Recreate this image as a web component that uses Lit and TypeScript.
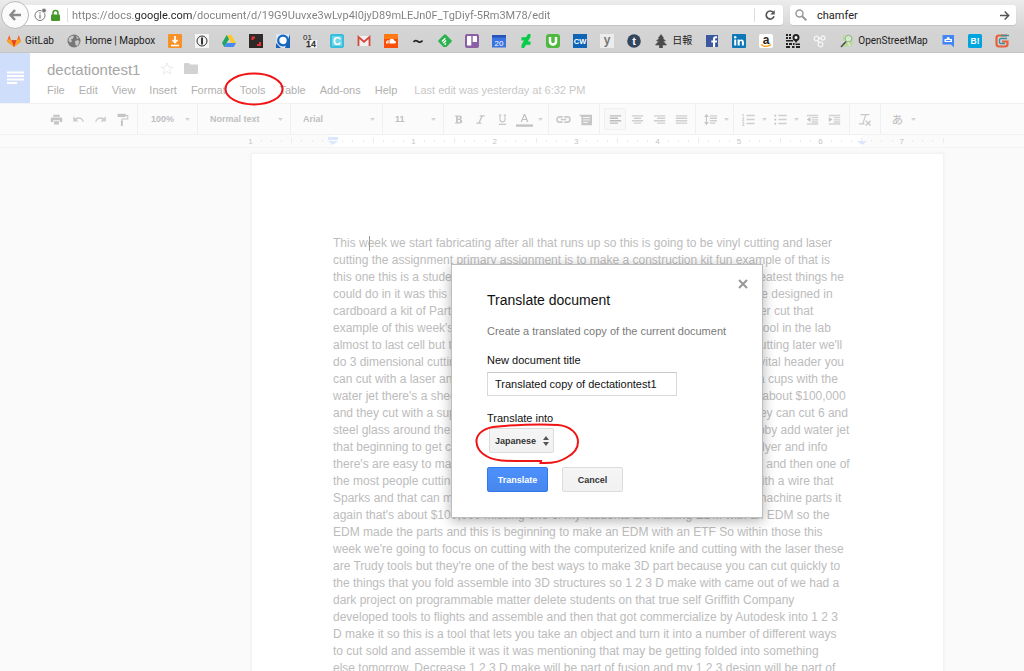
import { LitElement, html, svg, css } from "lit";
import { customElement, state } from "lit/decorators.js";

const bookmarkIcons: Record<string, unknown> = {
  gitlab: svg`<path d="M7 13 0 7.6 2.2 1l1.9 5.2h5.8L11.8 1 14 7.6z" fill="#f0642d"/><path d="M7 13 4.1 6.2h5.8z" fill="#e24329"/><path d="M0 7.6 1 5.6h3.1L7 13zM14 7.6l-1-2H9.900L7 13z" fill="#fca326"/>`,
  globe: svg`<circle cx="7" cy="7" r="6.500" fill="#777"/><path d="M2 4l3-2.500 2 1-1 2-2 1 1 2-2 1-1.500-2zM8 7l3-1 1.500 2-2 4-2-1zM9 2l3 2-2 1z" fill="#c9c9c9"/>`,
  download: svg`<rect width="14" height="14" rx="1" fill="#f7922a"/><path d="M7 2v6M4.500 6 7 8.500 9.500 6M3 11.500h8" stroke="#fff" stroke-width="1.700" fill="none"/>`,
  info: svg`<rect width="14" height="14" fill="#f4f4f4"/><circle cx="7" cy="7" r="5" fill="none" stroke="#333"/><path d="M7 3.500v7" stroke="#333" stroke-width="2"/>`,
  drive: svg`<path d="M4.700 1h4.600L14 9H9.400z" fill="#fdc92b"/><path d="M4.700 1 0 9l2.300 4L7 5z" fill="#1fa463"/><path d="M4.700 9H14l-2.300 4H2.300z" fill="#4688f4"/>`,
  corners: svg`<rect width="14" height="14" fill="#2e2a2a"/><path d="M3.500 6V3.500H6M8 11h3V8" stroke="#e8332f" stroke-width="2" fill="none"/>`,
  ring: svg`<rect width="14" height="14" fill="#dce9f5"/><path d="M14 0v14H9zM0 14V9l5 5z" fill="#1b62b4"/><circle cx="7" cy="6.500" r="4.800" fill="#fff" stroke="#1568c1" stroke-width="2.200"/>`,
  nums: svg`<rect x="7" y="6" width="7" height="8" fill="#f4f4f4"/><text x="0" y="6" font-size="8" fill="#222">01</text><text x="3" y="13" font-size="9" fill="#222" stroke="#222" stroke-width=".3">14</text>`,
  cyan: svg`<rect width="14" height="14" rx="2" fill="#35bfdc"/><rect x="2" y="2" width="10" height="10" rx="1" fill="#70d5e8"/><text x="7" y="11" font-size="11" font-weight="700" text-anchor="middle" fill="#fff">C</text>`,
  gmail: svg`<path d="M1 2h12v10H1z" fill="#f1f1f1"/><path d="M1.500 12V3L7 7.800 12.500 3v9" stroke="#d5483b" stroke-width="1.800" fill="none"/>`,
  cloud: svg`<rect width="14" height="14" fill="#f8500a"/><path d="M0 0h14v5H0z" fill="#ff7a14"/><path d="M6 9.500V5.300c2-1.400 4-.2 4.200 1.500 2-.2 2.500 2.500.5 2.700zM2 7.300h.9v2.200H2zM3.300 6.300h.9v3.200h-.9zM4.600 6h.9v3.500h-.9z" fill="#fff"/>`,
  tilde: svg`<path d="M2.500 8c1.500-2.200 3-1.500 4.500-.5s3 1.200 4.500-1" stroke="#222" stroke-width="1.600" fill="none"/>`,
  feedly: svg`<path d="M7 .3q.6 0 1 .4l5.500 5.500q.7.8 0 1.600L9 12.500q-.5.5-1.200.5H6.200q-.7 0-1.200-.5L.5 7.800q-.7-.8 0-1.600L6 .7q.4-.4 1-.4z" fill="#2bb24c"/><path d="M4 7.500l3.300-3.300M5.300 9.200 8 6.500M6.700 10.700l1.200-1.200" stroke="#fff" stroke-width="1.500"/>`,
  trello: svg`<rect width="14" height="14" rx="2" fill="#8b5fa5"/><rect x="2" y="2" width="4.300" height="9.500" rx=".6" fill="#fff"/><rect x="7.700" y="2" width="4.300" height="6" rx=".6" fill="#fff"/>`,
  calendar: svg`<path d="M0 2h14v11.500H0z" fill="#3d73e0"/><path d="M0 1h14v2.500H0z" fill="#2554b5"/><text x="7" y="11.500" font-size="8" text-anchor="middle" fill="#fff">20</text>`,
  deviant: svg`<path d="M11.500 0v3L8.800 7.500h2.700v3.200H7L5 14H2.500v-3L5 6.500H2.500V3.300H7L9 0z" fill="#05cc47"/>`,
  udemy: svg`<rect width="14" height="14" rx="3" fill="#4fb83e"/><path d="M4 3v4.500a3 3 0 0 0 6 0V3" stroke="#fff" stroke-width="2.500" fill="none"/>`,
  cw: svg`<rect width="14" height="14" fill="#0e65b5"/><text x="7" y="10" font-size="7.500" font-weight="700" text-anchor="middle" fill="#fff">CW</text>`,
  yletter: svg`<rect width="14" height="14" fill="#ececec"/><text x="7" y="10" font-size="12" font-weight="700" text-anchor="middle" fill="#777">y</text>`,
  tumblr: svg`<circle cx="7" cy="7" r="6.800" fill="#34465d"/><text x="7" y="11" font-size="11" font-weight="700" text-anchor="middle" fill="#fff">t</text>`,
  tree: svg`<path d="M7 .5 9.500 4H8.500l3 3H9l3.500 4H8.500v3h-3v-3h-4L5 7H2.500l3-3h-1z" fill="#4a4a4a" stroke="#4a4a4a" stroke-width=".6"/>`,
  facebook: svg`<rect x="1" y="1" width="12" height="12" fill="#3b579d"/><path d="M8 13V8.500H6.300v-2H8V5c0-1.800 1-2.700 2.600-2.700h1.500v1.900h-1c-.8 0-1 .4-1 1v1.300h2l-.3 2h-1.700V13z" fill="#fff"/>`,
  linkedin: svg`<rect width="14" height="14" rx="1" fill="#0d77b7"/><path d="M2.200 5.500h2v6h-2zM5.600 5.500h2v.8c1-1.500 4.300-1.300 4.300 1.700v3.500h-2V8.500c0-2-2.200-1.700-2.200 0v3h-2.100z" fill="#fff"/><circle cx="3.200" cy="3.300" r="1.200" fill="#fff"/>`,
  amazon: svg`<rect width="14" height="14" rx="2" fill="#fff"/><text x="7" y="9.500" font-size="12" font-weight="700" text-anchor="middle" fill="#222">a</text><path d="M2 10.500c3 2.300 7 2.300 10 0" stroke="#f90" stroke-width="1.300" fill="none"/>`,
  qr: svg`<path d="M0 0h2v2H0zM3 0h2v2H3zM0 3h2v2H0zM3 3h2v2H3zM0 6h7v1.500H0zM0 9h2v2H0zM3 9h3v2H3zM0 12h4v2H0zM7 9h1.500v2H7zM6 12h2.500v2H6zM9.500 9.500H14V11H9.500zM10 12h4v2h-4z" fill="#222"/><circle cx="10" cy="3.500" r="2.500" stroke="#222" stroke-width="2" fill="#fff"/><path d="M8 6h4L10 9z" fill="#222"/>`,
  circles: svg`<g fill="none" stroke="#f5f5f5" stroke-width="1.300"><circle cx="3.500" cy="4.500" r="2.300"/><circle cx="10" cy="4" r="2"/><circle cx="7.500" cy="10.500" r="2.300"/><path d="M5.800 4.500H8M4.800 6.500 6.300 8.500"/></g>`,
  osm: svg`<path d="M3 1 13 3l-1 9-9 1z" fill="#b9d89a"/><path d="M3 8l9-4M5 2l5 10" stroke="#fff" stroke-width=".8"/><circle cx="8.500" cy="4.500" r="3.300" fill="#d5ecdc" fill-opacity=".7" stroke="#93b783"/><path d="M6 7.500 1 13" stroke="#555" stroke-width="1.700"/>`,
  chat: svg`<path d="M1.500 1H13v12.500L10 10.500H1.500z" fill="#4285f4"/><path d="M3.500 5h7.500v3H3.500z" fill="#fff"/><circle cx="7.200" cy="4.500" r="1.500" fill="#fff"/><path d="M5 6.500h4.500" stroke="#4285f4"/>`,
  hatena: svg`<rect width="14" height="14" rx="1.500" fill="#00a4de"/><text x="7" y="10" font-size="8.500" font-weight="700" text-anchor="middle" fill="#fff">B!</text>`,
  spiral: svg`<path d="M12 1.500H4Q1.500 1.500 1.500 4v6q0 2.500 2.500 2.500h6q2.500 0 2.500-2.500V7.500H7" stroke="#e8603a" stroke-width="2.200" fill="none"/><path d="M14 1.500H6M12 4.500H6q-1.500 0-1.500 1.500v2.500q0 1 1 1H10" stroke="#3a8f9e" stroke-width="1.300" fill="none"/>`,
};

const bookmarks: { icon: string; label?: string }[] = [
  { icon: "gitlab", label: "GitLab" },
  { icon: "globe", label: "Home | Mapbox" },
  ...["download", "info", "drive", "corners", "ring", "nums", "cyan", "gmail", "cloud", "tilde", "feedly", "trello",
    "calendar", "deviant", "udemy", "cw", "yletter", "tumblr"].map((icon) => ({ icon })),
  { icon: "tree", label: "日報" },
  ...["facebook", "linkedin", "amazon", "qr", "circles"].map((icon) => ({ icon })),
  { icon: "osm", label: "OpenStreetMap" },
  ...["chat", "hatena", "spiral"].map((icon) => ({ icon })),
];

@customElement("browser-chrome")
export class BrowserChrome extends LitElement {
  static styles = css`
    :host { display: block; font-family: Roboto, "Noto Sans CJK JP", sans-serif; color: #2a2a2a;
      background: linear-gradient(#ececec, #d4d4d4 60%, #d1d1d1); border-bottom: 1px solid #c6c6c6; }
    .nav { display: flex; align-items: center; height: 30px; padding-right: 8px; }
    .back { box-sizing: border-box; flex: none; width: 28px; height: 28px; border: 1px solid #b9b9b9; border-radius: 50%;
      background: #fbfbfb; padding: 0; display: grid; place-items: center; z-index: 1; margin-left: 1px; }
    .address { flex: 1; display: flex; align-items: center; height: 20px; background: #fff; margin-left: -10px;
      padding-left: 15px; border-radius: 0 3px 3px 0; min-width: 0; box-shadow: 0 1px 1px #c4c4c4; }
    .security { flex: none; border-right: 1px solid #ddd; height: 14px; padding-right: 5px; margin-right: 4px; }
    input { border: 0; padding: 0; outline: 0; font: inherit; min-width: 0; flex: 1; height: 18px; }
    .url { font-size: 11px; color: transparent; -webkit-text-fill-color: transparent;
      background: linear-gradient(90deg, #7d7d7d 62px, #222 62px, #222 121px, #7d7d7d 121px);
      -webkit-background-clip: text; background-clip: text; }
    .reload { flex: none; border: 0; border-left: 1px solid #ddd; background: none; padding: 0 0 0 1px; width: 29px; height: 14px;
      display: grid; place-items: center; }
    .search { flex: none; width: 226px; box-sizing: border-box; height: 20px; background: #fff; border-radius: 3px;
      margin-left: 7px; padding: 0 6px 0 5px; display: flex; align-items: center; gap: 10px; box-shadow: 0 1px 1px #c4c4c4; }
    .search input { font-size: 11px; color: #222; }
    .go { border: 0; background: none; padding: 0; display: grid; }
    .marks { display: flex; gap: 13px; align-items: center; height: 22px; padding-left: 7px; overflow: hidden; }
    .mark { display: flex; align-items: center; gap: 4px; color: #222; text-decoration: none; font-size: 10px;
      line-height: 14px; white-space: nowrap; flex: none; }
    .mark svg { flex: none; font-family: "Liberation Sans", sans-serif; }
  `;
  render() {
    return html`
      <div class="nav">
        <button class="back" aria-label="Back">
          <svg width="14" height="14" viewBox="0 0 14 14"><path d="M7 2 2.500 7 7 12M3 7h10" stroke="#8b8b8b" stroke-width="2.500" fill="none"/></svg>
        </button>
        <div class="address">
          <svg class="security" width="28" height="14" viewBox="0 0 28 14">
            <circle cx="6" cy="7.500" r="5" fill="none" stroke="#777"/><path d="M6 6.500v4M6 4.200v1.200" stroke="#777" stroke-width="1.200"/>
            <circle cx="10" cy="2.500" r="2.300" fill="#777" stroke="#fff" stroke-width=".6"/>
            <path d="M19 7V5a2.500 2.500 0 0 1 5 0v2" fill="none" stroke="#43982c" stroke-width="1.500"/><rect x="17" y="6.500" width="9" height="6.500" rx="1" fill="#43982c"/>
          </svg>
          <input class="url" aria-label="Address" .value=${"https://docs.google.com/document/d/19G9Uuvxe3wLvp4I0jyD89mLEJn0F_TgDiyf-5Rm3M78/edit"} />
          <button class="reload" aria-label="Reload">
            <svg width="12" height="12" viewBox="0 0 12 12"><path d="M9.300 3.500A4 4 0 1 0 10 7.200" fill="none" stroke="#555" stroke-width="1.700"/><path d="M10.700 1v4.500H6.300z" fill="#555"/></svg>
          </button>
        </div>
        <div class="search">
          <svg width="12" height="12" viewBox="0 0 12 12"><circle cx="4.500" cy="4.500" r="3.500" fill="none" stroke="#999" stroke-width="1.500"/><path d="M7.200 7.200 11.300 11.300" stroke="#999" stroke-width="2"/></svg>
          <input aria-label="Search" .value=${"chamfer"} />
          <button class="go" aria-label="Go"><svg width="11" height="11" viewBox="0 0 11 11"><path d="M1 5.500h8M5.700 1.500l4 4-4 4" stroke="#555" stroke-width="1.500" fill="none"/></svg></button>
        </div>
      </div>
      <nav class="marks">
        ${bookmarks.map((b) => html`<a class="mark" href="#" aria-label=${b.label ?? b.icon}><svg width="14" height="14" viewBox="0 0 14 14">${bookmarkIcons[b.icon]}</svg>${b.label ?? ""}</a>`)}
      </nav>`;
  }
}

const lines = (d: string, c = "#cfcfcf") => svg`<path d=${d} stroke=${c} stroke-width="1.700" fill="none"/>`;
const tools: Record<string, unknown> = {
  print: svg`<path d="M4 2h8v2.500H4zM2 5.500h12a1 1 0 0 1 1 1V11h-3V9H4v2H1V6.500a1 1 0 0 1 1-1zM5 10h6v4H5z" fill="#c4c4c4"/>`,
  undo: svg`<path d="M1.500 4v6.500H8L5.600 8.200c3-2 6-1 7.600 2.800l1.500-.5C13 5.500 8 4 4 6.600z" fill="#cccccc"/>`,
  redo: svg`<path d="M14.500 4v6.500H8l2.400-2.300c-3-2-6-1-7.600 2.800l-1.500-.5C3 5.500 8 4 12 6.600z" fill="#cccccc"/>`,
  paint: svg`<path d="M2 1h10v4H2z" fill="#c4c4c4"/><path d="M12 3h2.500v4.500H7.200V10" stroke="#c4c4c4" stroke-width="1.300" fill="none"/><path d="M6 9.500h2.500V16H6z" fill="#c4c4c4"/>`,
  bold: svg`<path d="M3.500 3h5.700q3 0 3 2.600 0 1.600-1.500 2.200 2 .5 2 2.500 0 2.700-3.300 2.700H3.500v-1.200H5V4.200H3.500zM7.300 4.600v2.500h1.200q1.300 0 1.300-1.300 0-1.200-1.300-1.200zM7.300 8.600v2.700h1.500q1.400 0 1.400-1.400 0-1.300-1.400-1.300z" fill="#c4c4c4" fill-rule="evenodd"/>`,
  italic: svg`<path d="M7 3.500h6M3 12.500h6M10 3.500 6 12.500" stroke="#c4c4c4" stroke-width="1.700" fill="none"/>`,
  underline: svg`<path d="M5 2.500V8q0 3 3 3t3-3V2.500M3.500 2.500h3M9.500 2.500h3M3.500 14h9" stroke="#c6c6c6" stroke-width="1.400" fill="none"/>`,
  color: svg`<path d="M4 11 7.700 2h.6L12 11M5.300 8h5.400" stroke="#c0c0c0" stroke-width="1.500" fill="none"/><path d="M-2.500 14h21v3h-21z" fill="#c4c4c4"/>`,
  link: svg`<path d="M7 4.800H3.200a3 3 0 0 0 0 6.400H7M9 4.800h3.800a3 3 0 0 1 0 6.400H9M4.500 8h7" stroke="#c9c9c9" stroke-width="2" fill="none"/>`,
  comment: svg`<path d="M0 2h16v13H3V5z" fill="#c6c6c6"/><path d="M5 5.500h8.500M5 8.500h8.500M5 11.500h6" stroke="#fff"/>`,
  left: lines("M1 3.500h14M1 6.500h10M1 9.500h14M1 12.500h10", "#bbb"),
  center: lines("M1 3.500h14M3.500 6.500h9M1 9.500h14M3.500 12.500h9"),
  right: lines("M1 3.500h14M5 6.500h10M1 9.500h14M5 12.500h10"),
  justify: lines("M1 3.500h14M1 6.500h14M1 9.500h14M1 12.500h14"),
  spacing: svg`<path d="M3 4v8" stroke="#c6c6c6" stroke-width="1.500"/><path d="M0 5 3 1l3 4zM0 11l3 4 3-4z" fill="#c6c6c6"/>${lines("M7 3.500h9M7 6.500h9M7 9.500h9M7 12.500h7")}`,
  numbered: svg`${lines("M5.500 3h10M5.500 8h10M5.500 13h10")}<path d="M0 1.500h1.500v4M0 6.700h2.500L.5 9.500h2.200M0 11.500h2.200v4H0M.7 13.500h1.500" stroke="#c9c9c9" fill="none"/>`,
  bullets: svg`${lines("M5.500 3h10M5.500 8h10M5.500 13h10")}<path d="M.5 2h2.200v2.200H.5zM.5 7h2.200v2.200H.5zM.5 12h2.200v2.200H.5z" fill="#c2c2c2"/>`,
  outdent: svg`${lines("M1 3h14M7 5.700h8M7 8.400h8M7 11h8M1 13.500h14", "#d2d2d2")}<path d="M5.500 5v6L1 8z" fill="#c4c4c4"/>`,
  indent: svg`${lines("M1 3h14M7 5.700h8M7 8.400h8M7 11h8M1 13.500h14", "#d2d2d2")}<path d="M1 5v6l4.500-3z" fill="#c4c4c4"/>`,
  clear: svg`<path d="M3 2h11M9.500 2 6 13M1 13.500h7" stroke="#c9c9c9" stroke-width="1.500" fill="none"/><path d="M9.500 9.500l6 6M15.500 9.500l-6 6" stroke="#c9c9c9" stroke-width="1.700"/>`,
  kana: svg`<text x="8" y="13" text-anchor="middle" font-size="14" font-weight="500" font-family="Noto Sans CJK JP" fill="#c4c4c4">あ</text>`,
};

const leftMargin = 332;
const inch = 81.4;

@customElement("docs-header")
export class DocsHeader extends LitElement {
  static styles = css`
    :host { display: block; font-family: "Liberation Sans", Arial, sans-serif; background: #fff; color: #b0b0b0; }
    button, select { font: inherit; color: inherit; border: 0; background: none; padding: 0; margin: 0; }
    .top { display: flex; height: 50px; }
    .home { flex: none; width: 30px; background: #cedefb; display: grid; place-items: center; }
    .info { padding-left: 17px; }
    .name { display: flex; align-items: center; height: 30px; padding-top: 2px; gap: 20px; }
    h1 { font-size: 15px; line-height: 18px; font-weight: 400; margin: 0; color: #a6a6a6; }
    .badges { display: flex; gap: 10px; }
    .menu { display: flex; gap: 14px; font-size: 11px; line-height: 13px; color: #b0b0b0; white-space: nowrap; margin-top: -1px; }
    .saved { color: #c8c8c8; padding-left: 3px; }
    .tools { display: flex; height: 30px; background: #fbfbfb; border-top: 1px solid #f2f2f2; border-bottom: 1px solid #f1f1f1;
      font-size: 9px; font-weight: 700; overflow: hidden; }
    .group { flex: none; box-sizing: border-box; display: flex; align-items: center; border-right: 1px solid #f0f0f0; padding-left: 3px; }
    .group:last-child { border: 0; padding-left: 5px; }
    .first { width: 138px; padding-left: 45px; }
    .tool { width: 22px; height: 22px; display: grid; place-items: center; flex: none; box-sizing: border-box; }
    .tool svg { overflow: visible; }
    .on { background: #f8f8f8; border: 1px solid #f0f0f0; border-radius: 1px; }
    .arrow { flex: none; width: 10px; display: grid; place-items: center; }
    .pick { padding-left: 12px; padding-right: 5px; }
    select { appearance: none; flex: 1; min-width: 0; color: #bfbfbf; height: 16px; }
    .zoom { width: 60px; padding-left: 13px; }
    .style { width: 93px; }
    .font { width: 92px; }
    .size { width: 61px; }
    .format { width: 105px; }
    .insert { width: 51px; }
    .align { width: 96px; padding-left: 4px; }
    .space { width: 38px; }
    .lists { width: 116px; }
    .reset { width: 31px; }
    .ruler { display: block; width: 100%; height: 12px; background: #fbfbfb; border-bottom: 1px solid #f3f3f3; }
  `;
  private tool(name: string, on = false) {
    return html`<button class="tool ${on ? "on" : ""}" aria-label=${name}><svg width="13" height="13" viewBox="0 0 16 16">${tools[name]}</svg></button>`;
  }
  private arrow() {
    return html`<span class="arrow"><svg width="5" height="3" viewBox="0 0 5 3"><path d="M0 0h5L2.500 3z" fill="#d4d4d4"/></svg></span>`;
  }
  private pick(cls: string, name: string, value: string) {
    return html`<div class="group pick ${cls}"><select aria-label=${name}><option>${value}</option></select>${this.arrow()}</div>`;
  }
  private ticks() {
    const out = [];
    for (let k = -7; k < 61; k++) {
      if (k % 8 === 0) continue;
      const x = Math.round(leftMargin + (k * inch) / 8) + 0.5;
      out.push(k % 4 === 0
        ? svg`<path d="M${x} 3v5" stroke="#ebebeb"/>`
        : svg`<path d="M${x} 5v2" stroke="#ebebeb"/>`);
    }
    return out;
  }
  render() {
    return html`
      <div class="top">
        <a class="home" href="#" aria-label="Docs home"><svg width="17" height="14" viewBox="0 0 17 14"><path d="M0 1.500h17M0 5h17M0 8.500h17M0 12h10" stroke="#fff" stroke-width="1.800"/></svg></a>
        <div class="info">
          <div class="name">
            <h1>dectationtest1</h1>
            <div class="badges">
              <button aria-label="Star"><svg width="14" height="13" viewBox="0 0 14 13"><path d="M7 .8 8.600 5h4.400L9.500 7.700l1.300 4.300L7 9.400 3.200 12l1.300-4.300L1 5h4.400z" fill="none" stroke="#ebebeb"/></svg></button>
              <button aria-label="Folder"><svg width="14" height="13" viewBox="0 0 14 13"><path d="M0 2q0-1 1-1h4l1.500 1.500H13q1 0 1 1V11q0 1-1 1H1q-1 0-1-1z" fill="#d2d2d2"/></svg></button>
            </div>
          </div>
          <div class="menu">
            ${["File", "Edit", "View", "Insert", "Format", "Tools", "Table", "Add-ons", "Help"].map((m) => html`<button>${m}</button>`)}
            <span class="saved">Last edit was yesterday at 6:32 PM</span>
          </div>
        </div>
      </div>
      <div class="tools">
        <div class="group first">${["print", "undo", "redo", "paint"].map((t) => this.tool(t))}</div>
        ${this.pick("zoom", "Zoom", "100%")}${this.pick("style", "Style", "Normal text")}
        ${this.pick("font", "Font", "Arial")}${this.pick("size", "Font size", "11")}
        <div class="group format">${["bold", "italic", "underline", "color"].map((t) => this.tool(t))}${this.arrow()}</div>
        <div class="group insert">${this.tool("link")}${this.tool("comment")}</div>
        <div class="group align">${this.tool("left", true)}${["center", "right", "justify"].map((t) => this.tool(t))}</div>
        <div class="group space">${this.tool("spacing")}${this.arrow()}</div>
        <div class="group lists">${this.tool("numbered")}${this.arrow()}${this.tool("bullets")}${this.arrow()}${this.tool("outdent")}${this.tool("indent")}</div>
        <div class="group reset">${this.tool("clear")}</div>
        <div class="group">${this.tool("kana")}${this.arrow()}</div>
      </div>
      <svg class="ruler" height="12">
        <rect x=${leftMargin} width="530" height="12" fill="#fff"/>
        ${this.ticks()}
        ${[-1, 1, 2, 3, 4, 5, 6, 7].map((n) => svg`<text x=${leftMargin + n * inch} y="9" text-anchor="middle" font-size="8" fill="#c4c4c4">${Math.abs(n)}</text>`)}
        <path d="M328 2h10v3h-10zM328 6h10l-5 4zM857 6h10l-5 4z" fill="#dbe7fd"/>
      </svg>`;
  }
}

const paragraph = [
  "This week we start fabricating after all that runs up so this is going to be vinyl cutting and laser",
  "cutting the assignment primary assignment is to make a construction kit fun example of that is",
  "this one this is a student Sam who made here one of the very first and still the greatest things he",
  "could do in it was this fully press fit construction kit of cardboard parts and then he designed in",
  "cardboard a kit of Parts that would click together with finger joints made by a water cut that",
  "example of this week's assignment is the most used and most loved machine or tool in the lab",
  "almost to last cell but this is where we begin the class with computer controlled cutting later we'll",
  "do 3 dimensional cutting and the machines that do it which always really need a vital header you",
  "can cut with a laser and you can also cut it with a high pressure jet of water that a cups with the",
  "water jet there's a sheet of metal on a bed here and the complete machine costs about $100,000",
  "and they cut with a supersonic stream of water and of abrasive garnet so here they can cut 6 and",
  "steel glass around the shop and there is now a much smaller portable cutting hobby add water jet",
  "that beginning to get cheap enough for a research lab and so have a look at the flyer and info",
  "there's are easy to maintain and they can cut through anything flat here in the lab and then one of",
  "the most people cutting metal with high precision is an EDM machine so it cuts with a wire that",
  "Sparks and that can make very fine features and it is also how you would make machine parts it",
  "again that's about $100,000 missing one of my students are making EDM with an EDM so the",
  "EDM made the parts and this is beginning to make an EDM with an ETF So within those this",
  "week we're going to focus on cutting with the computerized knife and cutting with the laser these",
  "are Trudy tools but they're one of the best ways to make 3D part because you can cut quickly to",
  "the things that you fold assemble into 3D structures so 1 2 3 D make with came out of we had a",
  "dark project on programmable matter delete students on that true self Griffith Company",
  "developed tools to flights and assemble and then that got commercialize by Autodesk into 1 2 3",
  "D make it so this is a tool that lets you take an object and turn it into a number of different ways",
  "to cut sold and assemble it was it was mentioning that may be getting folded into something",
  "else tomorrow. Decrease 1 2 3 D make will be part of fusion and my 1 2 3 design will be part of",
];

@customElement("translate-dialog")
export class TranslateDialog extends LitElement {
  static styles = css`
    :host { display: block; box-sizing: border-box; width: 312px; padding: 26px 35px 25px; background: #fff; border: 1px solid #bdbdbd;
      box-shadow: 0 3px 12px rgba(0, 0, 0, 0.3); font: 11px/14px "Liberation Sans", Arial, sans-serif; color: #111; }
    .close { position: absolute; top: 14px; right: 14px; border: 0; background: none; padding: 0; display: grid; }
    h2 { margin: 0; font-size: 14px; line-height: 18px; font-weight: 400; }
    p { margin: 15px 0; color: #7b7b7b; white-space: nowrap; }
    label { display: block; }
    input { box-sizing: border-box; display: block; width: 190px; height: 24px; margin: 5px 0 15px; padding: 0 7px; border: 1px solid #d9d9d9;
      border-top-color: #c8c8c8; font: inherit; color: #111; }
    .pick { display: grid; width: 65px; margin: 3px 0 14px 2px; align-items: center; }
    .pick > * { grid-area: 1 / 1; }
    .pick svg { justify-self: end; margin-right: 5px; pointer-events: none; }
    select, .action { font: 700 9px/12px "Liberation Sans", Arial, sans-serif; box-sizing: border-box; height: 25px; border: 1px solid #dcdcdc;
      border-radius: 2px; background: linear-gradient(#f5f5f5, #f1f1f1); color: #444; margin: 0; }
    select { appearance: none; padding: 0 5px; color: #333; }
    .actions { display: flex; gap: 14px; }
    .action { width: 61px; padding: 0; color: #333; }
    .primary { background: linear-gradient(#4d90fe, #4787ed); border-color: #3079ed; color: #fff; }
  `;
  render() {
    return html`
      <button class="close" aria-label="Close"><svg width="10" height="10" viewBox="0 0 10 10"><path d="M1 1l8 8M9 1 1 9" stroke="#999" stroke-width="2"/></svg></button>
      <h2>Translate document</h2>
      <p>Create a translated copy of the current document</p>
      <label for="title">New document title</label>
      <input id="title" .value=${"Translated copy of dectationtest1"} />
      <label for="language">Translate into</label>
      <div class="pick">
        <select id="language"><option>Japanese</option></select>
        <svg width="6" height="10" viewBox="0 0 6 10"><path d="M0 4 3 0l3 4zM0 6l3 4 3-4z" fill="#555"/></svg>
      </div>
      <div class="actions"><button class="action primary">Translate</button><button class="action">Cancel</button></div>`;
  }
}

@customElement("app-root")
export class AppRoot extends LitElement {
  static styles = css`
    :host { display: flex; flex-direction: column; position: relative; height: 100vh; overflow: hidden; background: #fafafa;
      font-family: "Liberation Sans", Arial, sans-serif; }
    browser-chrome, docs-header { flex: none; }
    .canvas { flex: 1; min-height: 0; overflow: hidden; display: grid; grid-template-columns: 251px minmax(0, 693px) 1fr; padding-top: 5px; }
    .page { grid-column: 2; background: #fff; border: 1px solid #f3f3f3; box-shadow: 0 0 3px #eee; padding: 81px 0 0 81px; }
    .text { margin: 0; font-size: 12px; line-height: 17px; color: #bcbcbc; white-space: nowrap; }
    .line { display: block; }
    .caret { position: absolute; left: 369px; top: 236px; width: 1px; height: 15px; background: #999; }
    .dialog { position: absolute; left: 451px; top: 264px; }
    .mark { position: absolute; pointer-events: none; fill: none; stroke: #f01414; }
    .tools-mark { left: 222px; top: 70px; }
    .language-mark { left: 474px; top: 422px; }
  `;
  @state() private open = true;
  render() {
    return html`
      <browser-chrome></browser-chrome>
      <docs-header></docs-header>
      <main class="canvas"><article class="page"><p class="text">${paragraph.map((l) => html`<span class="line">${l}</span>`)}</p></article></main>
      <span class="caret"></span>
      ${this.open ? html`<translate-dialog class="dialog" role="dialog" aria-label="Translate document"></translate-dialog>` : ""}
      <svg class="mark tools-mark" width="64" height="38" viewBox="0 0 64 38"><ellipse cx="32" cy="19" rx="28.500" ry="15.500" stroke-width="2"/></svg>
      <svg class="mark language-mark" width="108" height="44" viewBox="0 0 108 44"><path d="M19 5C8 7 2 13 2.500 20c.5 9 9 17 25 18.500 12 1 28 .5 39.500.5l-.5 2c10 .5 20-1 27-6 7-4 10.500-10 10.500-15C104 12 97 4 84 3c-18-1.500-48 0-65 2" stroke-width="2"/></svg>`;
  }
}
